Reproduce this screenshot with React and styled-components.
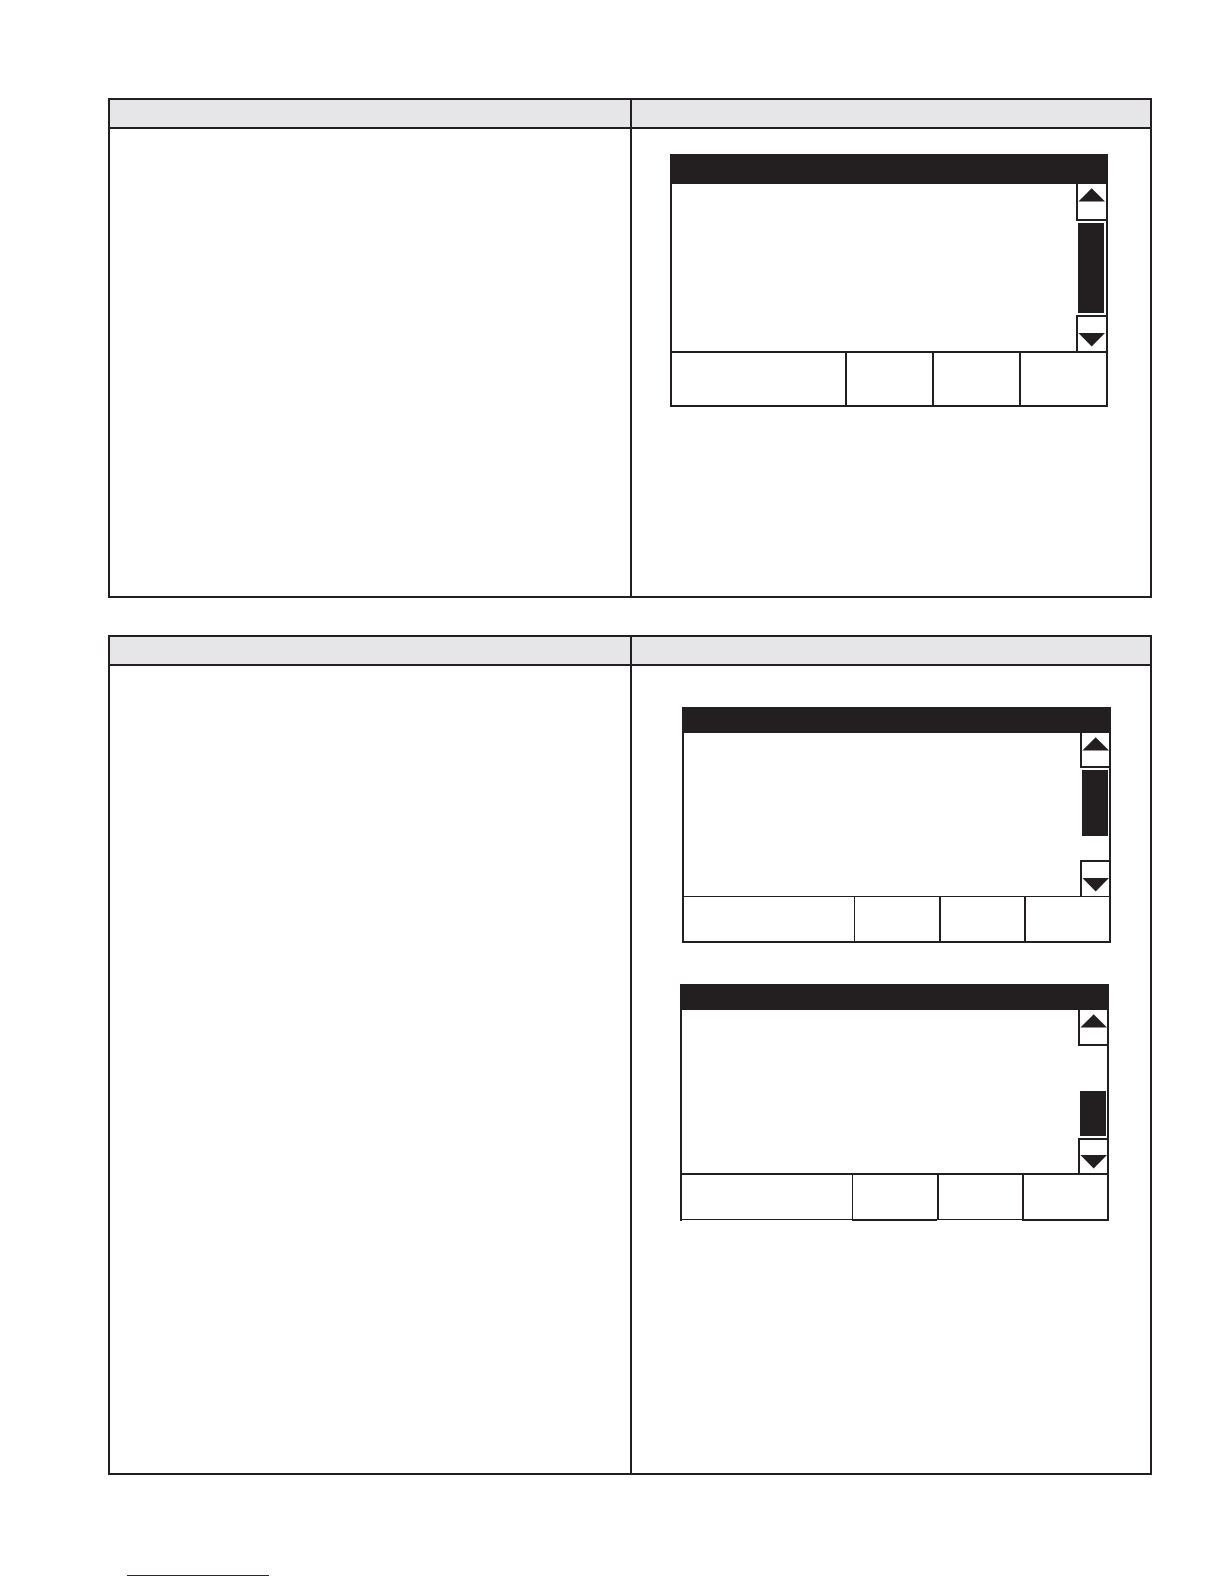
import React from 'react';
import styled, { createGlobalStyle } from 'styled-components';

const screens = {
    first: {
        titleHeight: 30,
        bodyHeight: 167,
        margin: '25px 42px 0 38px',
        barWidth: 30,
        up: 37,
        down: 36,
        thumb: 90,
        line: 2,
        keyWidth: 87,
        keyHeight: 52,
        keys: [
            { name: 'Message', left: 0, bottom: 2 },
            { name: 'Key 1', left: 2, bottom: 2 },
            { name: 'Key 2', left: 2, bottom: 2 },
            { name: 'Key 3', left: 2, bottom: 2 },
        ],
    },
    second: {
        titleHeight: 26,
        bodyHeight: 163,
        margin: '41px 39px 0 50px',
        barWidth: 29,
        up: 35,
        down: 36,
        thumb: 66,
        line: 1,
        keyWidth: 85,
        keyHeight: 44,
        keys: [
            { name: 'Message', left: 0, bottom: 2 },
            { name: 'Key 1', left: 1, bottom: 2 },
            { name: 'Key 2', left: 2, bottom: 2 },
            { name: 'Key 3', left: 2, bottom: 2 },
        ],
    },
    third: {
        titleHeight: 26,
        bodyHeight: 163,
        margin: '41px 41px 0 48px',
        barWidth: 29,
        up: 36,
        down: 35,
        thumb: 45,
        thumbAtEnd: true,
        line: 2,
        keyWidth: 85,
        keyHeight: 44,
        keys: [
            { name: 'Message', left: 0, bottom: 1 },
            { name: 'Key 1', left: 1, bottom: 2 },
            { name: 'Key 2', left: 2, bottom: 1 },
            { name: 'Key 3', left: 2, bottom: 2 },
        ],
    },
};

const Screen = ({ data }) => {
    return (
        <ScreenFrame $margin={data.margin}>
            <ScreenTitle $height={data.titleHeight} />
            <ScreenBody $height={data.bodyHeight}>
                <ScrollBar $width={data.barWidth}>
                    <ScrollUp type="button" aria-label="Scroll up" $height={data.up}>
                        <svg width="27" height="14" viewBox="0 0 27 14">
                            <path d="M13.7 0.3L27 13.6H0.4Z" fill="#231f20" />
                        </svg>
                    </ScrollUp>
                    <ScrollTrack $atEnd={data.thumbAtEnd}>
                        <ScrollThumb $height={data.thumb} />
                    </ScrollTrack>
                    <ScrollDown type="button" aria-label="Scroll down" $height={data.down}>
                        <svg width="27" height="14" viewBox="0 0 27 14">
                            <path d="M0.4 0H27L13.7 13.4Z" fill="#231f20" />
                        </svg>
                    </ScrollDown>
                </ScrollBar>
            </ScreenBody>
            <SoftKeys $line={data.line} $keyWidth={data.keyWidth}>
                {data.keys.map((key) => (
                    <SoftKey
                        key={key.name}
                        type="button"
                        aria-label={key.name}
                        $height={data.keyHeight}
                        $left={key.left}
                        $bottom={key.bottom}
                    />
                ))}
            </SoftKeys>
        </ScreenFrame>
    );
};

const Procedure = ({ height, children }) => {
    return (
        <StepTable>
            <thead>
                <tr>
                    <HeadCell />
                    <HeadCell />
                </tr>
            </thead>
            <tbody>
                <tr>
                    <StepCell $height={height} />
                    <StepCell $height={height}>{children}</StepCell>
                </tr>
            </tbody>
        </StepTable>
    );
};

const App = () => {
    return (
        <>
            <GlobalStyle />
            <Page>
                <Procedure height={467}>
                    <Screen data={screens.first} />
                </Procedure>
                <Procedure height={807}>
                    <Screen data={screens.second} />
                    <Screen data={screens.third} />
                </Procedure>
                <FooterLink href="#top" aria-label="Back to contents" />
            </Page>
        </>
    );
};

export default App;

const GlobalStyle = createGlobalStyle`
  * {
    box-sizing: border-box;
  }
  body {
    margin: 0;
    background-color: #fff;
    font-family: "Liberation Sans", Arial, sans-serif;
  }
  button {
    display: block;
    margin: 0;
    padding: 0;
    border: 0 solid #231f20;
    border-radius: 0;
    background: none;
    cursor: pointer;
  }
`;

const Page = styled.main`
  display: flex;
  flex-direction: column;
  padding: 98px 72px 8px 108px;
`;

const StepTable = styled.table`
  width: 100%;
  table-layout: fixed;
  border-collapse: separate;
  border-spacing: 0;
  border: 2px solid #231f20;

  & + & {
    margin-top: 37px;
  }
`;

const HeadCell = styled.th`
  height: 29px;
  padding: 0;
  background-color: #e6e6e8;
  border-bottom: 2px solid #231f20;

  & + & {
    border-left: 2px solid #231f20;
  }
`;

const StepCell = styled.td`
  height: ${props => props.$height}px;
  padding: 0;
  vertical-align: top;

  & + & {
    border-left: 2px solid #231f20;
  }
`;

const ScreenFrame = styled.section`
  margin: ${props => props.$margin};
`;

const ScreenTitle = styled.header`
  height: ${props => props.$height}px;
  background-color: #231f20;
`;

const ScreenBody = styled.div`
  display: flex;
  justify-content: flex-end;
  height: ${props => props.$height}px;
  border: solid #231f20;
  border-width: 0 2px;
`;

const ScrollBar = styled.div`
  display: flex;
  flex-direction: column;
  width: ${props => props.$width}px;
`;

const ScrollButton = styled.button`
  display: flex;
  width: 100%;
  height: ${props => props.$height}px;
`;

const ScrollUp = styled(ScrollButton)`
  align-items: flex-start;
  padding-top: 4px;
  border-width: 0 0 2px 2px;
`;

const ScrollDown = styled(ScrollButton)`
  align-items: flex-end;
  padding-bottom: 4px;
  border-width: 2px 0 0 2px;
`;

const ScrollTrack = styled.div`
  display: flex;
  flex: 1;
  flex-direction: column;
  justify-content: ${props => (props.$atEnd ? 'flex-end' : 'flex-start')};
  padding: 2px 0 2px 2px;
`;

const ScrollThumb = styled.div`
  width: 26px;
  height: ${props => props.$height}px;
  background-color: #231f20;
`;

const SoftKeys = styled.div`
  display: grid;
  grid-template-columns: 1fr repeat(3, ${props => props.$keyWidth}px);
  align-items: start;
  border: solid #231f20;
  border-width: ${props => props.$line}px 2px 0;
`;

const SoftKey = styled.button`
  box-sizing: content-box;
  height: ${props => props.$height}px;
  border-left-width: ${props => props.$left}px;
  border-bottom-width: ${props => props.$bottom}px;
`;

const FooterLink = styled.a`
  width: 142px;
  margin: 100px 0 0 19px;
  border-bottom: 1px solid #1c1c96;
`;
